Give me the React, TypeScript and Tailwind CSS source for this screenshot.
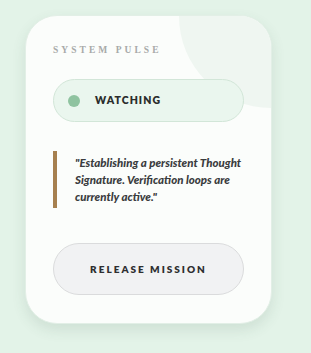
import React from 'react';

const App: React.FC = () => {
  return (
    <div className="min-h-[353px] w-[311px] bg-[#e3f3e8] pl-[25px] pt-[15px]" style={{ fontFamily: "Lato, 'Open Sans', sans-serif" }}>
      <div className="relative w-[247px] overflow-hidden rounded-[32px] border border-[#e2efe6] bg-[#fbfdfb] px-[27px] pt-[27px] pb-[28px] shadow-[0_6px_14px_rgba(60,90,70,0.12)]">
        {/* decorative corner */}
        <div className="absolute top-0 right-0 h-[92px] w-[92px] rounded-bl-full bg-[#eff6f1]" />

        <div className="relative">
          <div className="h-[15px] text-[9.5px] font-bold leading-[15px] tracking-[0.32em] text-[#a8aaa9]" style={{ fontFamily: "'Liberation Serif', 'DejaVu Serif', serif" }}>
            SYSTEM PULSE
          </div>

          <div className="mt-[21px] flex h-[43px] items-center rounded-full border border-[#d2e6d8] bg-[#eaf6ee] pl-[14px]">
            <span className="h-[12px] w-[12px] rounded-full bg-[#8fc3a0]" />
            <span className="ml-[15px] text-[10.5px] font-extrabold tracking-[0.1em] text-[#2a2d2c]">WATCHING</span>
          </div>

          <div className="mt-[29px] border-l-4 border-[#a6804f] py-[3px] pl-[18px]">
            <p className="text-[11.5px] font-black italic leading-[17px] text-[#3a3c3e]">
              "Establishing a persistent Thought Signature. Verification loops are currently active."
            </p>
          </div>

          <button className="mt-[35px] flex h-[52px] w-full items-center justify-center rounded-full border border-[#dadbdc] bg-[#f1f2f3] text-[10px] font-extrabold tracking-[0.2em] text-[#2e2f30]">
            RELEASE MISSION
          </button>
        </div>
      </div>
    </div>
  );
};

export default App;
